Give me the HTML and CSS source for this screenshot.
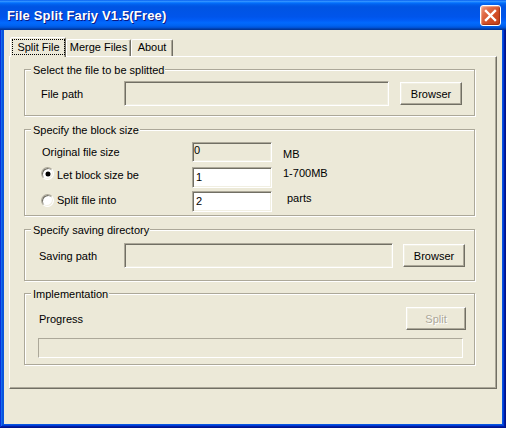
FILE: index.html
```html
<!DOCTYPE html>
<html lang="en">
<head>
<meta charset="utf-8">
<title>File Split Fariy V1.5(Free)</title>
<link rel="stylesheet" href="styles.css">
</head>
<body>
<div class="window">
  <div class="titlebar">
    <span class="title">File Split Fariy V1.5(Free)</span>
    <button class="close" aria-label="Close">
      <svg width="19" height="19" viewBox="0 0 19 19"><path d="M5 5 L14 14 M14 5 L5 14" stroke="#fff" stroke-width="2.4" stroke-linecap="square" fill="none"/></svg>
    </button>
  </div>
  <div class="client">
    <div class="tabs">
      <div class="tab tab-active"><span class="focus">Split File</span></div>
      <div class="tab tab-merge">Merge Files</div>
      <div class="tab tab-about">About</div>
    </div>
    <div class="panel">
      <section class="group g1">
        <div class="group-title">Select the file to be splitted</div>
        <div class="row row-file">
          <span class="lbl lbl-file">File path</span>
          <input class="edit ro path path1" type="text" readonly>
          <button class="btn btn-browse1">Browser</button>
        </div>
      </section>

      <section class="group g2">
        <div class="group-title">Specify the block size</div>
        <div class="row row-size r1">
          <span class="lbl lbl-orig">Original file size</span>
          <input class="edit ro small v0" type="text" value="0" readonly>
          <span class="unit u-mb">MB</span>
        </div>
        <div class="row row-size r2">
          <span class="radio-label rl1"><span class="radio checked"></span><span>Let block size be</span></span>
          <input class="edit small v1" type="text" value="1">
          <span class="unit u-range">1-700MB</span>
        </div>
        <div class="row row-size r3">
          <span class="radio-label rl2"><span class="radio"></span><span>Split file into</span></span>
          <input class="edit small v2" type="text" value="2">
          <span class="unit u-parts">parts</span>
        </div>
      </section>

      <section class="group g3">
        <div class="group-title">Specify saving directory</div>
        <div class="row row-save">
          <span class="lbl lbl-save">Saving path</span>
          <input class="edit ro path path2" type="text" readonly>
          <button class="btn btn-browse2">Browser</button>
        </div>
      </section>

      <section class="group g4">
        <div class="group-title">Implementation</div>
        <div class="row row-progress">
          <span class="lbl">Progress</span>
          <button class="btn btn-split" disabled>Split</button>
        </div>
        <div class="progress"></div>
      </section>
    </div>
  </div>
</div>
</body>
</html>
```

FILE: styles.css
```css
* { box-sizing: border-box; }

html, body {
  margin: 0;
  padding: 0;
  background: #ECE9D8;
}

body {
  font-family: "Liberation Sans", Arial, sans-serif;
  font-size: 11px;
  color: #000;
}

.window {
  width: 506px;
  height: 428px;
  display: flex;
  flex-direction: column;
  background: #0855DD;
  box-shadow:
    inset -1px -1px #00138c,
    inset 1px 1px #0831d9,
    inset -2px -2px #001ea0,
    inset 2px 2px #166aee,
    inset -3px -3px #003bda,
    inset 3px 3px #0855dd;
}

.titlebar {
  height: 30px;
  flex: none;
  display: flex;
  align-items: center;
  justify-content: space-between;
  padding: 0 5px 0 7px;
  background: linear-gradient(180deg,
    #0058EE 0%, #3593FF 4%, #288EFF 6%, #127DFF 8%, #036FFC 10%,
    #0262EE 14%, #0057E5 20%, #0054E3 24%, #0055EB 56%, #005BF5 66%,
    #026AFE 76%, #0062EF 86%, #0052D6 92%, #0040AB 96%, #003092 100%);
}

.title {
  color: #fff;
  font-weight: bold;
  font-size: 13px;
  letter-spacing: 0.15px;
  padding-top: 1px;
  text-shadow: 1px 1px 0 #0A1883;
}

.close {
  width: 21px;
  height: 21px;
  margin-top: 1px;
  padding: 0;
  border: 1px solid #fff;
  border-radius: 3px;
  background: linear-gradient(135deg, #EE9A80 0%, #E06A45 30%, #D24E26 60%, #C43F18 100%);
  box-shadow: inset -1px -1px 1px rgba(120, 30, 10, 0.5), inset 1px 1px 1px rgba(255, 220, 200, 0.5);
  display: flex;
  align-items: center;
  justify-content: center;
}
.close svg { display: block; }

.client {
  flex: 1;
  margin: 0 4px 4px 4px;
  background: #ECE9D8;
}

/* Tabs */
.tabs {
  display: flex;
  align-items: flex-end;
  height: 19px;
  margin: 7px 0 0 6px;
}

.tab {
  height: 17px;
  border: 1px solid;
  border-bottom: none;
  border-color: #fff #716F64 transparent #fff;
  border-radius: 2px 2px 0 0;
  box-shadow: inset -1px 0 0 #ACA899;
  background: #ECE9D8;
  text-align: center;
  line-height: 15px;
}
.tab-merge { width: 65px; }
.tab-about { width: 42px; }

.tab-active {
  width: 56px;
  height: 20px;
  margin-bottom: -1px;
  position: relative;
  z-index: 1;
}
.focus {
  display: block;
  width: 53px;
  height: 16px;
  margin: 1px 0 0 1px;
  border: 1px dotted #000;
  line-height: 14px;
  text-align: center;
}

/* Panel */
.panel {
  width: 488px;
  height: 333px;
  margin-left: 5px;
  border: 1px solid;
  border-color: #fff #716F64 #716F64 #fff;
  box-shadow: inset -1px -1px 0 #ACA899;
  padding: 12px 21px 0 14px;
}

.group {
  border: 1px solid #ACA899;
  box-shadow: inset 1px 1px 0 #fff, 1px 1px 0 #fff;
}
.group-title {
  display: table;
  height: 13px;
  line-height: 13px;
  margin: -6px 0 0 6px;
  padding: 0 1px 0 2px;
  background: #ECE9D8;
}

.g1 { padding-bottom: 9px; }
.g2 { margin-top: 13px; padding-bottom: 3px; }
.g3 { margin-top: 13px; padding-bottom: 12px; }
.g4 { margin-top: 12px; padding-bottom: 6px; }

.row {
  display: flex;
  align-items: center;
}

.lbl { flex: none; }

/* group 1 */
.row-file { margin-top: 4px; padding-left: 16px; }
.lbl-file { width: 83px; }

/* edits */
.edit {
  font: inherit;
  color: #000;
  margin: 0;
  outline: none;
  border: 1px solid;
  border-color: #ACA899 #fff #fff #ACA899;
  box-shadow: inset 1px 1px 0 #716F64, inset -1px -1px 0 #F1EFE2;
  background: #fff;
  line-height: 13px;
}
.edit.ro { background: #ECE9D8; }

.path { height: 25px; padding: 0 2px; }
.path1 { width: 265px; }
.path2 { width: 269px; }

.small {
  width: 80px;
  flex: none;
}
.v0 { height: 20px; padding: 0 2px 5px 1px; }
.v1, .v2 { height: 21px; padding: 2px 2px 4px 3px; }

/* buttons */
.btn {
  font: inherit;
  color: #000;
  margin: 0;
  padding: 0;
  flex: none;
  height: 23px;
  border: 1px solid;
  border-color: #fff #716F64 #716F64 #fff;
  box-shadow: inset -1px -1px 0 #ACA899, inset 1px 1px 0 #F1EFE2;
  background: #ECE9D8;
  text-align: center;
}
.btn-browse1 { width: 62px; margin-left: 11px; }
.btn-browse2 { width: 62px; margin-left: 10px; }
.btn-split {
  width: 60px;
  color: #ACA899;
  text-shadow: 1px 1px 0 #fff;
}

/* group 2 */
.row-size { padding-left: 16px; }
.r1 { margin-top: 5px; height: 20px; }
.r2 { margin-top: 5px; height: 21px; }
.r3 { margin-top: 3px; height: 21px; }

.lbl-orig { width: 150px; margin-left: 1px; }

.radio-label {
  flex: none;
  width: 151px;
  display: flex;
  align-items: center;
}
.rl1 { margin-bottom: 6px; }
.rl2 { margin-bottom: 3px; }

.radio {
  flex: none;
  width: 13px;
  height: 13px;
  margin-right: 3px;
  border-radius: 50%;
  border: 1px solid;
  border-color: #ACA899 #fff #fff #ACA899;
  box-shadow: inset 1px 1px 0 #716F64, inset -1px -1px 0 #F1EFE2;
  background: #fff;
  display: flex;
  align-items: center;
  justify-content: center;
}
.rl1 .radio { margin-bottom: 2px; }
.radio.checked::after {
  content: "";
  width: 4px;
  height: 4px;
  border-radius: 50%;
  background: #000;
  box-shadow: 0 0 0 0.5px #000;
}

.unit { flex: none; }
.u-mb { margin-left: 11px; margin-top: 4px; }
.u-range { margin-left: 11px; margin-bottom: 9px; }
.u-parts { margin-left: 15px; margin-bottom: 7px; }

/* group 3 */
.row-save { margin-top: 6px; padding-left: 14px; }
.lbl-save { width: 85px; }

/* group 4 */
.row-progress {
  margin-top: 6px;
  padding: 0 8px 0 14px;
  justify-content: space-between;
}
.progress {
  width: 425px;
  height: 20px;
  margin: 8px 0 0 13px;
  border: 1px solid;
  border-color: #ACA899 #fff #fff #ACA899;
  background: #ECE9D8;
}
```
